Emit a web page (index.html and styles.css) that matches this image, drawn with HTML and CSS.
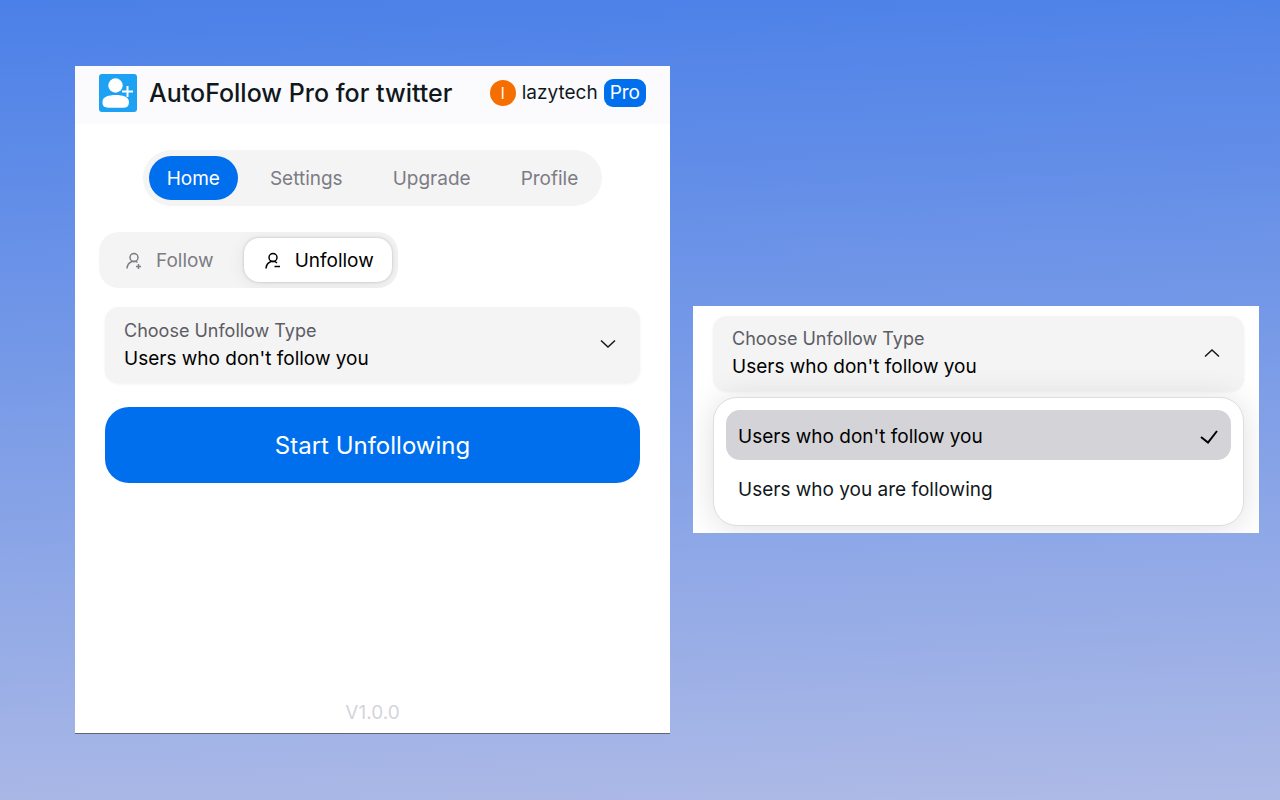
FILE: index.html
```html
<!DOCTYPE html>
<html lang="en">
<head>
    <meta charset="UTF-8">
    <meta name="viewport" content="width=device-width, initial-scale=1.0">
    <title>AutoFollow Pro for twitter</title>
    <link rel="stylesheet" href="styles.css">
</head>
<body>
    <main class="popup">
        <header>
            <svg class="logo" viewBox="0 0 38 38" aria-hidden="true">
                <rect width="38" height="38" rx="3" fill="#1da1f2"/>
                <circle cx="16.500" cy="11.500" r="7.200" fill="#fff"/>
                <path d="M3.500 27.500c0-4.500 6-6.500 13.200-6.500s13.200 2 13.200 6.500v1c0 3.500-2 5.200-5.200 5.200h-16c-3.200 0-5.200-1.700-5.200-5.200z" fill="#fff"/>
                <path d="M28.500 12v11M23 17.500h11" stroke="#fff" stroke-width="2"/>
            </svg>
            <h1>AutoFollow Pro for twitter</h1>
            <div class="account">
                <span class="avatar">l</span>
                <span>lazytech</span>
                <span class="badge">Pro</span>
            </div>
        </header>

        <nav>
            <a href="#home" class="active">Home</a>
            <a href="#settings">Settings</a>
            <a href="#upgrade">Upgrade</a>
            <a href="#profile">Profile</a>
        </nav>

        <div class="modes">
            <button type="button">
                <svg class="mode-icon" viewBox="0 0 18 18" aria-hidden="true">
                    <circle cx="9" cy="5.500" r="4"/>
                    <path d="M2 16.500c.3-3.700 2.200-6 5-7h4l1.500 1M13.500 12v5M11 14.500h5"/>
                </svg>
                Follow
            </button>
            <button type="button" class="active">
                <svg class="mode-icon" viewBox="0 0 18 18" aria-hidden="true">
                    <circle cx="9" cy="5.500" r="4"/>
                    <path d="M2 16.500c.3-3.700 2.200-6 5-7h4l2 1.500M10.500 14.500h5.500"/>
                </svg>
                Unfollow
            </button>
        </div>

        <form>
            <div class="select-box">
                <label for="unfollow_type">Choose Unfollow Type</label>
                <select id="unfollow_type" name="unfollow_type">
                    <option>Users who don't follow you</option>
                    <option>Users who you are following</option>
                </select>
                <svg class="chevron" viewBox="0 0 16 10" aria-hidden="true"><path d="M1 1.500l7 6.500 7-6.500"/></svg>
            </div>
            <button type="submit" class="start">Start Unfollowing</button>
        </form>

        <footer>V1.0.0</footer>
    </main>

    <section class="preview">
        <div class="select-box">
            <label for="open_type">Choose Unfollow Type</label>
            <select id="open_type" name="open_type">
                <option>Users who don't follow you</option>
                <option>Users who you are following</option>
            </select>
            <svg class="chevron" viewBox="0 0 16 10" aria-hidden="true"><path d="M1 8.500l7-6.500 7 6.500"/></svg>
        </div>
        <ul class="options">
            <li>
                <button type="button" class="selected">
                    Users who don't follow you
                    <svg class="check" viewBox="0 0 18 14" aria-hidden="true"><path d="M1 7l7 5.500L17 1"/></svg>
                </button>
            </li>
            <li><button type="button">Users who you are following</button></li>
        </ul>
    </section>
</body>
</html>
```
FILE: styles.css
```css
* {
    box-sizing: border-box;
}
body {
    margin: 0;
    padding: 66px 21px 66px 75px;
    min-height: 100vh;
    display: grid;
    grid-template-columns: 595fr 566fr;
    column-gap: 23px;
    align-items: start;
    font-family: Inter, "Liberation Sans", sans-serif;
    font-size: 19px;
    line-height: 28px;
    color: #11181c;
    background: linear-gradient(178deg, #4b80e8, #aebae6);
}
button, select {
    font: inherit;
    color: inherit;
    border: none;
    background: none;
    cursor: pointer;
}
.popup {
    display: flex;
    flex-direction: column;
    min-height: 668px;
    background: white;
    border-bottom: 1px solid #62656d;
}
header {
    display: flex;
    align-items: center;
    height: 58px;
    padding: 0 24px 4px;
    background: #fbfbfe;
}
.logo {
    width: 38px;
    height: 38px;
    margin-right: 12px;
}
h1 {
    margin: 0;
    font-size: 25px;
    font-weight: 500;
    white-space: nowrap;
}
.account {
    display: flex;
    align-items: center;
    gap: 6px;
    margin-left: auto;
}
.avatar {
    width: 26px;
    height: 26px;
    border-radius: 50%;
    background: #f56e00;
    color: white;
    font-size: 16px;
    line-height: 26px;
    text-align: center;
}
.badge {
    padding: 0 6px;
    border-radius: 9px;
    background: #006fee;
    color: white;
}
nav {
    display: flex;
    gap: 14px;
    align-self: center;
    margin-top: 26px;
    padding: 6px;
    border-radius: 28px;
    background: #f4f4f4;
}
nav a {
    padding: 9px 18px 7px;
    border-radius: 22px;
    color: #7c7c84;
    text-decoration: none;
}
nav a.active {
    background: #006fee;
    color: white;
}
.modes {
    display: flex;
    gap: 12px;
    align-self: flex-start;
    margin: 26px 24px 0;
    padding: 6px;
    border-radius: 20px;
    background: #f4f4f4;
    overflow: hidden;
}
.modes button {
    display: flex;
    align-items: center;
    gap: 13px;
    padding: 9px 18px 7px 20px;
    border-radius: 15px;
    color: #7c7c84;
}
.modes .active {
    background: white;
    color: black;
    box-shadow: 0 0 3px rgba(0, 0, 0, 0.2), 0 2px 18px rgba(0, 0, 0, 0.08);
}
.mode-icon {
    width: 18px;
    height: 18px;
}
.mode-icon, .chevron, .check {
    fill: none;
    stroke: currentColor;
    stroke-width: 1.5;
}
form {
    margin: 19px 30px 0;
}
.select-box {
    position: relative;
    height: 76px;
    padding: 10px 19px;
    border-radius: 14px;
    background: #f4f4f4;
    box-shadow: 0 1px 3px rgba(0, 0, 0, 0.06);
}
.select-box label {
    display: block;
    font-size: 18px;
    color: #5c5c64;
}
.select-box select {
    appearance: none;
    display: block;
    width: 100%;
    padding: 0;
    color: black;
}
.chevron {
    position: absolute;
    right: 24px;
    top: 32px;
    width: 16px;
    height: 10px;
    pointer-events: none;
}
.start {
    width: 100%;
    height: 76px;
    margin-top: 24px;
    padding: 2px 0 0;
    border-radius: 24px;
    background: #006fee;
    color: white;
    font-size: 24px;
}
footer {
    margin-top: auto;
    padding-bottom: 6px;
    text-align: center;
    color: #d4d4dc;
}
.preview {
    margin-top: 240px;
    padding: 10px 15px 7px 20px;
    background: white;
    overflow: hidden;
}
.preview .select-box {
    height: 75px;
    padding-top: 9px;
}
.options {
    position: relative;
    margin: 6px 0 0;
    padding: 12px;
    border: 1px solid #dedee0;
    border-radius: 24px;
    background: white;
    box-shadow: 0 2px 32px rgba(0, 0, 0, 0.13);
    list-style: none;
}
.options li + li {
    margin-top: 3px;
}
.options button {
    display: flex;
    align-items: center;
    justify-content: space-between;
    width: 100%;
    height: 50px;
    padding: 3px 13px 0 12px;
    border-radius: 14px;
    text-align: left;
}
.options .selected {
    background: #d4d4d8;
    color: black;
}
.check {
    width: 18px;
    height: 14px;
    stroke-width: 2;
}
```
